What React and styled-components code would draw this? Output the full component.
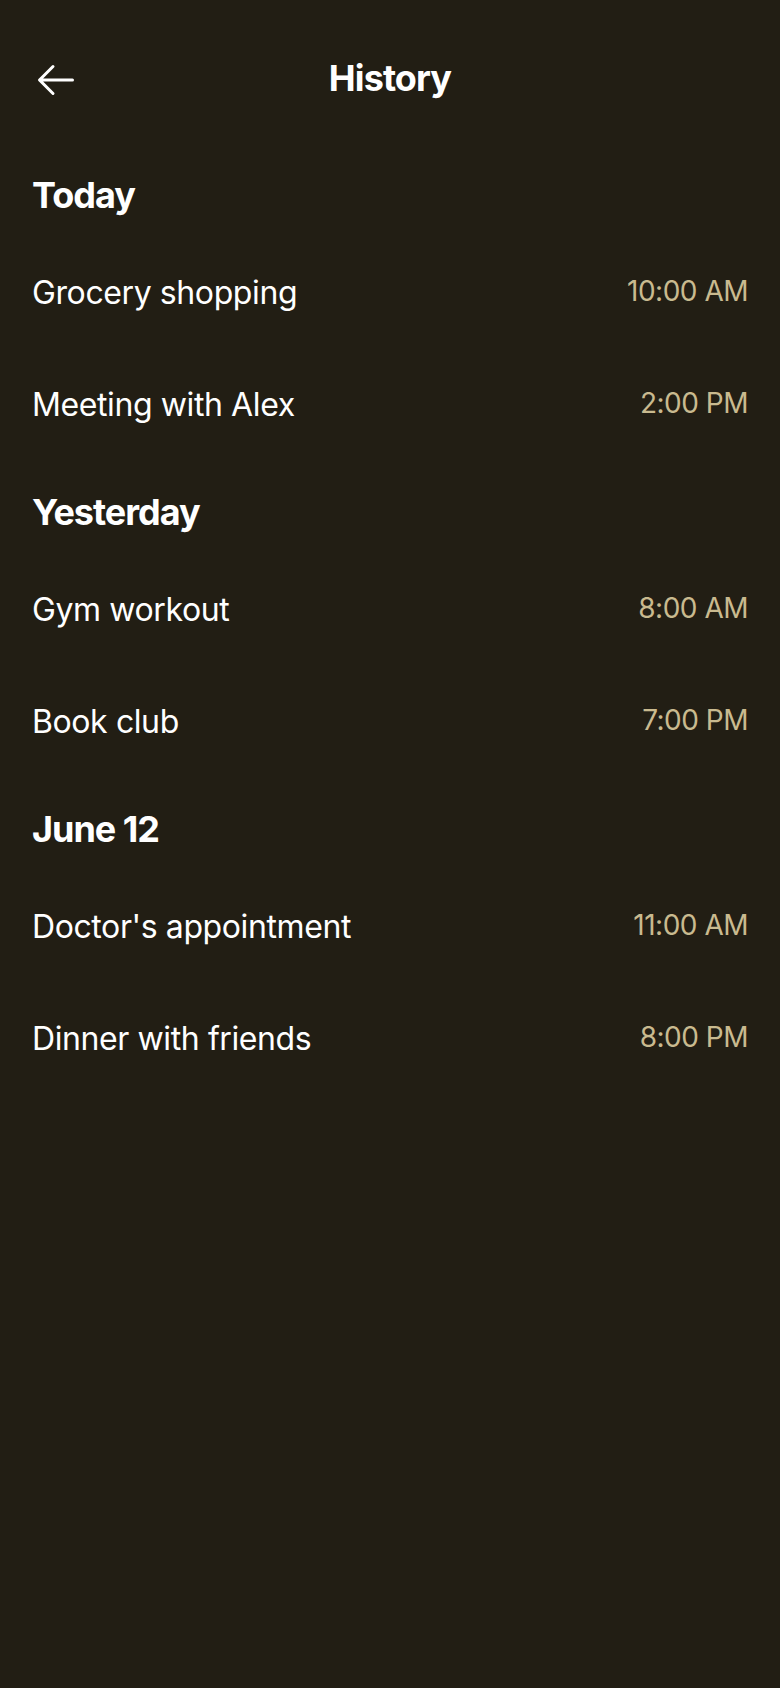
import React from 'react';
import styled, { createGlobalStyle } from 'styled-components';

const GlobalStyle = createGlobalStyle`
  html, body {
    margin: 0;
    padding: 0;
    background: #221e14;
  }
  body {
    font-family: 'Inter', 'Noto Sans', sans-serif;
    -webkit-font-smoothing: antialiased;
  }
`

const Screen = styled.div`
  min-height: 1688px;
  width: 780px;
  background: #221e14;
  display: flex;
  flex-direction: column;
`

const Header = styled.header`
  display: flex;
  align-items: center;
  justify-content: space-between;
  padding: 32px 32px 16px;
`

const BackButton = styled.button`
  display: flex;
  align-items: center;
  width: 96px;
  height: 96px;
  flex-shrink: 0;
  padding: 0;
  border: none;
  background: none;
  color: #fff;
  cursor: pointer;
`

const Title = styled.h2`
  flex: 1;
  margin: 0;
  padding: 0 96px 4px 0;
  text-align: center;
  color: #fff;
  font-size: 36px;
  font-weight: 700;
  line-height: 1.25;
  letter-spacing: -0.9px;
`

const SectionTitle = styled.h3`
  margin: 0;
  padding: 29px 32px 19px;
  color: #fff;
  font-size: 36px;
  font-weight: 700;
  line-height: 1.25;
  letter-spacing: -1px;
`

const Row = styled.div`
  display: flex;
  align-items: center;
  justify-content: space-between;
  gap: 32px;
  min-height: 112px;
  padding: 0 32px;
`

const Label = styled.p`
  margin: 0;
  color: #fff;
  font-size: 32px;
  font-weight: 400;
  line-height: 48px;
  letter-spacing: -0.4px;
`

const Time = styled.p`
  margin: 0;
  flex-shrink: 0;
  color: #c9ba8f;
  font-size: 28px;
  font-weight: 400;
  line-height: 40px;
  letter-spacing: -0.5px;
  padding-bottom: 4px;
`

const ArrowLeft = () => (
  <svg width="48" height="48" viewBox="0 0 256 256" fill="currentColor">
    <path d="M224,128a8,8,0,0,1-8,8H59.31l58.35,58.34a8,8,0,0,1-11.32,11.32l-72-72a8,8,0,0,1,0-11.32l72-72a8,8,0,0,1,11.32,11.32L59.31,120H216A8,8,0,0,1,224,128Z" />
  </svg>
)

const sections = [
  {
    title: 'Today',
    items: [
      { label: 'Grocery shopping', time: '10:00 AM' },
      { label: 'Meeting with Alex', time: '2:00 PM' },
    ],
  },
  {
    title: 'Yesterday',
    items: [
      { label: 'Gym workout', time: '8:00 AM' },
      { label: 'Book club', time: '7:00 PM' },
    ],
  },
  {
    title: 'June 12',
    items: [
      { label: "Doctor's appointment", time: '11:00 AM' },
      { label: 'Dinner with friends', time: '8:00 PM' },
    ],
  },
];

const App = () => {
  return (
    <>
      <GlobalStyle />
      <Screen>
        <Header>
          <BackButton aria-label="Back">
            <ArrowLeft />
          </BackButton>
          <Title>History</Title>
        </Header>
        {sections.map(section => (
          <section key={section.title}>
            <SectionTitle>{section.title}</SectionTitle>
            {section.items.map(item => (
              <Row key={item.label}>
                <Label>{item.label}</Label>
                <Time>{item.time}</Time>
              </Row>
            ))}
          </section>
        ))}
      </Screen>
    </>
  )
}

export default App;
